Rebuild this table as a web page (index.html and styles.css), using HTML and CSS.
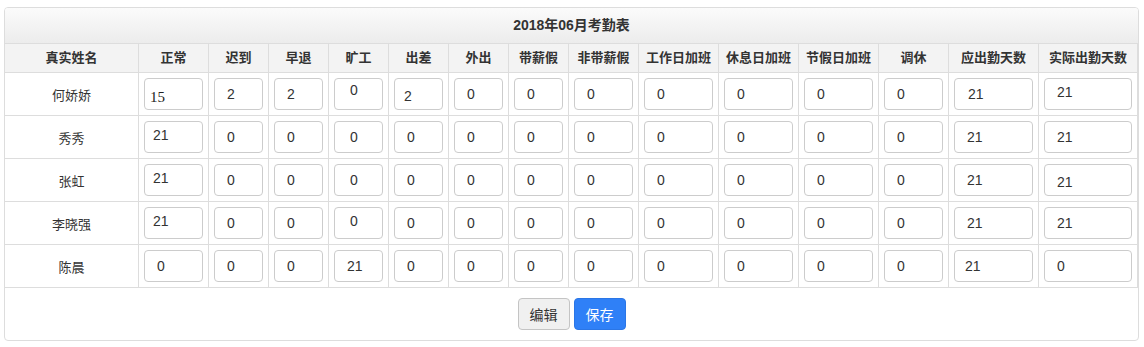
FILE: index.html
```html
<!DOCTYPE html>
<html lang="zh-CN">
<head>
<meta charset="utf-8">
<title>2018年06月考勤表</title>
<link rel="stylesheet" href="styles.css">
</head>
<body>
<div class="page">
  <div class="panel">
    <div class="panel-heading">2018年06月考勤表</div>
    <table class="sheet">
      <thead>
        <tr>
          <th class="w-name">真实姓名</th>
          <th class="w70">正常</th>
          <th class="w60">迟到</th>
          <th class="w60">早退</th>
          <th class="w60">旷工</th>
          <th class="w60">出差</th>
          <th class="w60">外出</th>
          <th class="w60">带薪假</th>
          <th class="w70">非带薪假</th>
          <th class="w80">工作日加班</th>
          <th class="w80">休息日加班</th>
          <th class="w80">节假日加班</th>
          <th class="w70">调休</th>
          <th class="w90">应出勤天数</th>
          <th class="w99">实际出勤天数</th>
        </tr>
      </thead>
      <tbody>
        <tr>
          <td class="name">何娇娇</td>
          <td><input class="cell serif" value="15"></td>
          <td><input class="cell" value="2"></td>
          <td><input class="cell" value="2"></td>
          <td><input class="cell pl15 up4" value="0"></td>
          <td><input class="cell pl9 down2" value="2"></td>
          <td><input class="cell" value="0"></td>
          <td><input class="cell" value="0"></td>
          <td><input class="cell" value="0"></td>
          <td><input class="cell" value="0"></td>
          <td><input class="cell" value="0"></td>
          <td><input class="cell" value="0"></td>
          <td><input class="cell" value="0"></td>
          <td><input class="cell pl13" value="21"></td>
          <td><input class="cell up2" value="21"></td>
        </tr>
        <tr>
          <td class="name">秀秀</td>
          <td><input class="cell pl8 up2" value="21"></td>
          <td><input class="cell" value="0"></td>
          <td><input class="cell" value="0"></td>
          <td><input class="cell pl15" value="0"></td>
          <td><input class="cell" value="0"></td>
          <td><input class="cell" value="0"></td>
          <td><input class="cell" value="0"></td>
          <td><input class="cell" value="0"></td>
          <td><input class="cell" value="0"></td>
          <td><input class="cell" value="0"></td>
          <td><input class="cell" value="0"></td>
          <td><input class="cell" value="0"></td>
          <td><input class="cell" value="21"></td>
          <td><input class="cell" value="21"></td>
        </tr>
        <tr>
          <td class="name">张虹</td>
          <td><input class="cell pl8 up2" value="21"></td>
          <td><input class="cell" value="0"></td>
          <td><input class="cell" value="0"></td>
          <td><input class="cell pl15" value="0"></td>
          <td><input class="cell" value="0"></td>
          <td><input class="cell" value="0"></td>
          <td><input class="cell" value="0"></td>
          <td><input class="cell" value="0"></td>
          <td><input class="cell" value="0"></td>
          <td><input class="cell" value="0"></td>
          <td><input class="cell" value="0"></td>
          <td><input class="cell" value="0"></td>
          <td><input class="cell" value="21"></td>
          <td><input class="cell down2" value="21"></td>
        </tr>
        <tr>
          <td class="name">李晓强</td>
          <td><input class="cell pl8 up2" value="21"></td>
          <td><input class="cell" value="0"></td>
          <td><input class="cell" value="0"></td>
          <td><input class="cell pl15 up2" value="0"></td>
          <td><input class="cell" value="0"></td>
          <td><input class="cell" value="0"></td>
          <td><input class="cell" value="0"></td>
          <td><input class="cell" value="0"></td>
          <td><input class="cell" value="0"></td>
          <td><input class="cell" value="0"></td>
          <td><input class="cell" value="0"></td>
          <td><input class="cell" value="0"></td>
          <td><input class="cell" value="21"></td>
          <td><input class="cell" value="21"></td>
        </tr>
        <tr>
          <td class="name">陈晨</td>
          <td><input class="cell" value="0"></td>
          <td><input class="cell" value="0"></td>
          <td><input class="cell" value="0"></td>
          <td><input class="cell" value="21"></td>
          <td><input class="cell" value="0"></td>
          <td><input class="cell" value="0"></td>
          <td><input class="cell" value="0"></td>
          <td><input class="cell" value="0"></td>
          <td><input class="cell" value="0"></td>
          <td><input class="cell" value="0"></td>
          <td><input class="cell" value="0"></td>
          <td><input class="cell" value="0"></td>
          <td><input class="cell pl10" value="21"></td>
          <td><input class="cell" value="0"></td>
        </tr>
      </tbody>
    </table>
    <div class="panel-footer">
      <button class="btn btn-default" type="button">编辑</button>
      <button class="btn btn-primary" type="button">保存</button>
    </div>
  </div>
</div>
</body>
</html>
```
FILE: styles.css
```css
* {
  box-sizing: border-box;
}

html, body {
  margin: 0;
  padding: 0;
  background: #fff;
}

body {
  font-family: "Liberation Sans", "Noto Sans CJK SC", sans-serif;
  font-size: 13px;
  color: #333;
}

.page {
  padding: 7px 5px 0 4px;
}

.panel {
  width: 1135px;
  border: 1px solid #ddd;
  border-radius: 4px;
  background: #fff;
  overflow: hidden;
}

.panel-heading {
  height: 36px;
  border-bottom: 1px solid #ddd;
  background: linear-gradient(to bottom, #fbfbfb 0%, #ececec 100%);
  text-align: center;
  font-size: 14px;
  font-weight: bold;
  line-height: 35px;
  color: #333;
}

.sheet {
  border-collapse: separate;
  border-spacing: 0;
  table-layout: fixed;
  width: 1133px;
}

.sheet th,
.sheet td {
  border-right: 1px solid #ddd;
  border-bottom: 1px solid #ddd;
  padding: 5px;
  text-align: center;
  vertical-align: middle;
}

.sheet th {
  height: 29px;
  background: #f3f3f3;
  font-weight: bold;
  font-size: 13px;
  line-height: 18px;
  padding: 5px 0;
  white-space: nowrap;
}

.sheet td {
  height: 43px;
}

.sheet td.name {
  font-size: 13px;
}

.w-name { width: 134px; }
.w60 { width: 60px; }
.w70 { width: 70px; }
.w80 { width: 80px; }
.w90 { width: 90px; }
.w99 { width: 99px; }

.cell {
  display: block;
  width: 100%;
  height: 32px;
  margin: 0;
  padding: 0 4px 0 12px;
  border: 1px solid #ccc;
  border-radius: 4px;
  background: #fff;
  font-family: "Liberation Sans", sans-serif;
  font-size: 14px;
  color: #333;
  outline: none;
}

.serif {
  font-family: "Liberation Serif", serif;
  font-size: 15px;
  color: #222;
  padding-left: 5px;
  padding-top: 7px;
}

.pl8 { padding-left: 8px; }
.pl9 { padding-left: 9px; }
.pl10 { padding-left: 10px; }
.pl13 { padding-left: 13px; }
.pl15 { padding-left: 15px; }

.up2 { padding-bottom: 4px; }
.up4 { padding-bottom: 8px; }
.down2 { padding-top: 4px; }

.panel-footer {
  padding: 10px;
  text-align: center;
  font-size: 0;
}

.btn {
  display: inline-block;
  height: 32px;
  margin: 0 2px;
  padding: 0 11px;
  border: 1px solid #ccc;
  border-radius: 4px;
  font-family: "Noto Sans CJK SC", "Liberation Sans", sans-serif;
  font-size: 14px;
  line-height: 30px;
  cursor: pointer;
}

.btn-default {
  background: #f0f0f0;
  border-color: #c4c4c4;
  color: #333;
}

.btn-primary {
  background: #2f80f7;
  border-color: #2b76e6;
  color: #fff;
}
```
